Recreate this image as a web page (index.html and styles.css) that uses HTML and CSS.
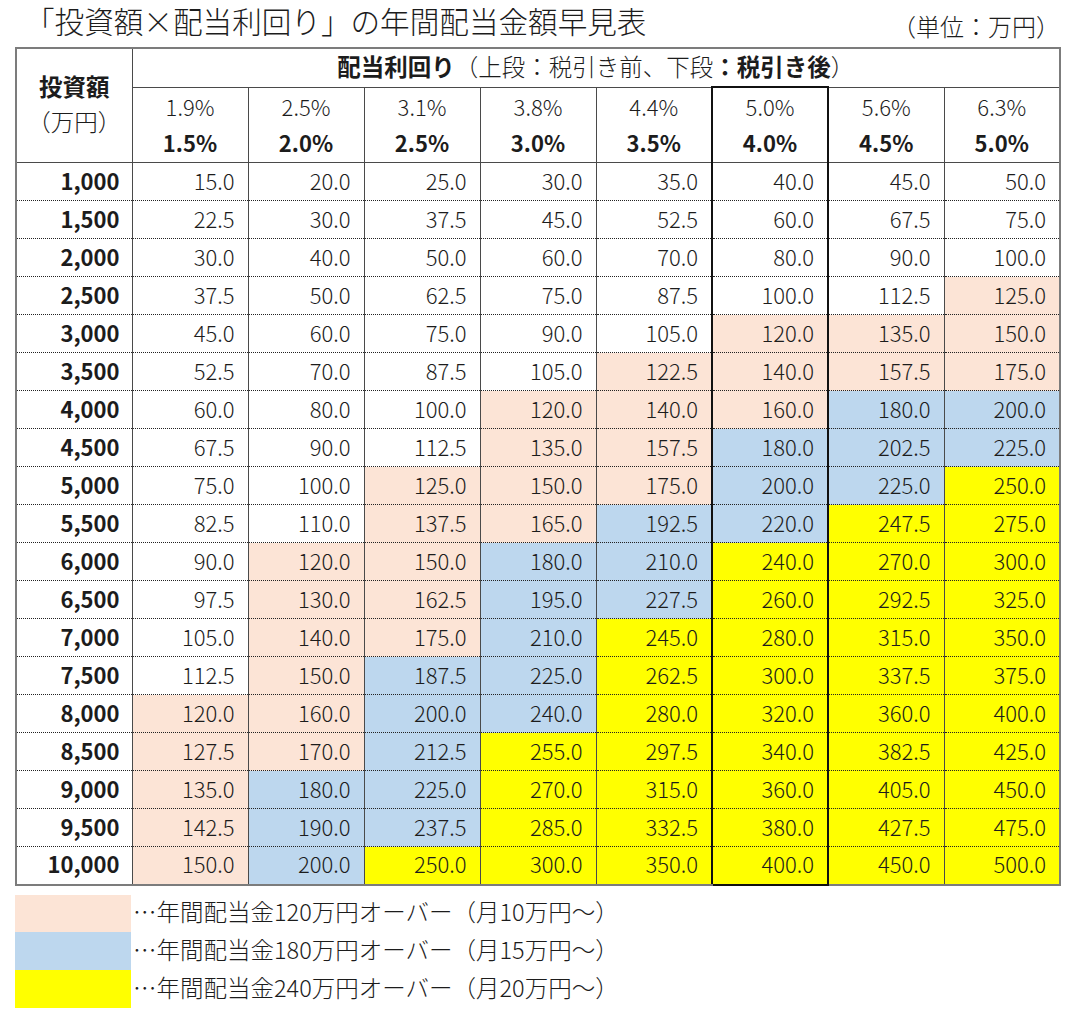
FILE: index.html
```html
<!DOCTYPE html>
<html lang="ja">
<head>
<meta charset="utf-8">
<title>年間配当金額早見表</title>
<link rel="stylesheet" href="styles.css">
</head>
<body>
<div class="page">
  <header class="title-row">
    <h1 class="title">「投資額×配当利回り」の年間配当金額早見表</h1>
    <span class="unit">（単位：万円）</span>
  </header>
  <table class="grid">
    <colgroup>
      <col class="c"><col class="c"><col class="c"><col class="c"><col class="c"><col class="c"><col class="c"><col class="c"><col class="c">
    </colgroup>
    <thead>
      <tr class="h1">
        <th class="corner" rowspan="2"><span class="strong">投資額</span><br>（万円）</th>
        <th class="rates" colspan="8"><span class="strong">配当利回り</span>（上段：税引き前、下段<span class="strong">：税引き後</span>）</th>
      </tr>
      <tr class="h2">
        <th>1.9%<br><span class="strong">1.5%</span></th>
        <th>2.5%<br><span class="strong">2.0%</span></th>
        <th>3.1%<br><span class="strong">2.5%</span></th>
        <th>3.8%<br><span class="strong">3.0%</span></th>
        <th>4.4%<br><span class="strong">3.5%</span></th>
        <th class="hl top">5.0%<br><span class="strong">4.0%</span></th>
        <th>5.6%<br><span class="strong">4.5%</span></th>
        <th>6.3%<br><span class="strong">5.0%</span></th>
      </tr>
    </thead>
    <tbody>
      <tr><th>1,000</th><td>15.0</td><td>20.0</td><td>25.0</td><td>30.0</td><td>35.0</td><td class="hl">40.0</td><td>45.0</td><td>50.0</td></tr>
      <tr><th>1,500</th><td>22.5</td><td>30.0</td><td>37.5</td><td>45.0</td><td>52.5</td><td class="hl">60.0</td><td>67.5</td><td>75.0</td></tr>
      <tr><th>2,000</th><td>30.0</td><td>40.0</td><td>50.0</td><td>60.0</td><td>70.0</td><td class="hl">80.0</td><td>90.0</td><td>100.0</td></tr>
      <tr><th>2,500</th><td>37.5</td><td>50.0</td><td>62.5</td><td>75.0</td><td>87.5</td><td class="hl">100.0</td><td>112.5</td><td class="p">125.0</td></tr>
      <tr><th>3,000</th><td>45.0</td><td>60.0</td><td>75.0</td><td>90.0</td><td>105.0</td><td class="hl p">120.0</td><td class="p">135.0</td><td class="p">150.0</td></tr>
      <tr><th>3,500</th><td>52.5</td><td>70.0</td><td>87.5</td><td>105.0</td><td class="p">122.5</td><td class="hl p">140.0</td><td class="p">157.5</td><td class="p">175.0</td></tr>
      <tr><th>4,000</th><td>60.0</td><td>80.0</td><td>100.0</td><td class="p">120.0</td><td class="p">140.0</td><td class="hl p">160.0</td><td class="b">180.0</td><td class="b">200.0</td></tr>
      <tr><th>4,500</th><td>67.5</td><td>90.0</td><td>112.5</td><td class="p">135.0</td><td class="p">157.5</td><td class="hl b">180.0</td><td class="b">202.5</td><td class="b">225.0</td></tr>
      <tr><th>5,000</th><td>75.0</td><td>100.0</td><td class="p">125.0</td><td class="p">150.0</td><td class="p">175.0</td><td class="hl b">200.0</td><td class="b">225.0</td><td class="y">250.0</td></tr>
      <tr><th>5,500</th><td>82.5</td><td>110.0</td><td class="p">137.5</td><td class="p">165.0</td><td class="b">192.5</td><td class="hl b">220.0</td><td class="y">247.5</td><td class="y">275.0</td></tr>
      <tr><th>6,000</th><td>90.0</td><td class="p">120.0</td><td class="p">150.0</td><td class="b">180.0</td><td class="b">210.0</td><td class="hl y">240.0</td><td class="y">270.0</td><td class="y">300.0</td></tr>
      <tr><th>6,500</th><td>97.5</td><td class="p">130.0</td><td class="p">162.5</td><td class="b">195.0</td><td class="b">227.5</td><td class="hl y">260.0</td><td class="y">292.5</td><td class="y">325.0</td></tr>
      <tr><th>7,000</th><td>105.0</td><td class="p">140.0</td><td class="p">175.0</td><td class="b">210.0</td><td class="y">245.0</td><td class="hl y">280.0</td><td class="y">315.0</td><td class="y">350.0</td></tr>
      <tr><th>7,500</th><td>112.5</td><td class="p">150.0</td><td class="b">187.5</td><td class="b">225.0</td><td class="y">262.5</td><td class="hl y">300.0</td><td class="y">337.5</td><td class="y">375.0</td></tr>
      <tr><th>8,000</th><td class="p">120.0</td><td class="p">160.0</td><td class="b">200.0</td><td class="b">240.0</td><td class="y">280.0</td><td class="hl y">320.0</td><td class="y">360.0</td><td class="y">400.0</td></tr>
      <tr><th>8,500</th><td class="p">127.5</td><td class="p">170.0</td><td class="b">212.5</td><td class="y">255.0</td><td class="y">297.5</td><td class="hl y">340.0</td><td class="y">382.5</td><td class="y">425.0</td></tr>
      <tr><th>9,000</th><td class="p">135.0</td><td class="b">180.0</td><td class="b">225.0</td><td class="y">270.0</td><td class="y">315.0</td><td class="hl y">360.0</td><td class="y">405.0</td><td class="y">450.0</td></tr>
      <tr><th>9,500</th><td class="p">142.5</td><td class="b">190.0</td><td class="b">237.5</td><td class="y">285.0</td><td class="y">332.5</td><td class="hl y">380.0</td><td class="y">427.5</td><td class="y">475.0</td></tr>
      <tr class="last"><th>10,000</th><td class="p">150.0</td><td class="b">200.0</td><td class="y">250.0</td><td class="y">300.0</td><td class="y">350.0</td><td class="hl y">400.0</td><td class="y">450.0</td><td class="y">500.0</td></tr>
    </tbody>
  </table>
  <ul class="legend">
    <li class="legend-item"><span class="swatch sw-p"></span><span class="legend-text">…年間配当金120万円オーバー（月10万円～）</span></li>
    <li class="legend-item"><span class="swatch sw-b"></span><span class="legend-text">…年間配当金180万円オーバー（月15万円～）</span></li>
    <li class="legend-item"><span class="swatch sw-y"></span><span class="legend-text">…年間配当金240万円オーバー（月20万円～）</span></li>
  </ul>
</div>
</body>
</html>
```

FILE: styles.css
```css
* { box-sizing: border-box; }

body {
  margin: 0;
  background: #ffffff;
  color: #1c1c1c;
  font-family: "Noto Sans CJK JP", "Noto Sans", sans-serif;
}

.page {
  width: 1075px;
  padding: 0 15px 0 15px;
}

.title-row {
  display: flex;
  justify-content: space-between;
  align-items: flex-start;
  height: 47px;
}

.title {
  margin: 0 0 0 10px;
  font-size: 29.6px;
  font-weight: 300;
  line-height: 41px;
}

.unit {
  font-size: 24px;
  font-weight: 300;
  line-height: 52px;
  margin-right: 0;
}

.grid {
  border-collapse: collapse;
  table-layout: fixed;
  width: 1045px;
  border: 2px solid #7c7c7c;
  font-size: 22px;
  font-weight: 300;
}

.grid col.c { width: 116px; }

.grid th,
.grid td {
  padding: 0;
  border-left: 1px solid #4a4a4a;
  border-right: 1px solid #4a4a4a;
  font-weight: 300;
}

.grid .strong { font-weight: 700; }

.grid .h1 th { height: 39px; padding-bottom: 3px; }

.grid .h2 th {
  height: 75px;
  padding-bottom: 2px;
  line-height: 36px;
  text-align: center;
  border-top: 1px solid #4a4a4a;
  border-bottom: 1px solid #4a4a4a;
}

.grid .corner {
  font-size: 23.5px;
  line-height: 35px;
  padding-bottom: 4px;
  text-align: center;
  vertical-align: middle;
  border-bottom: 1px solid #4a4a4a;
}

.grid .rates {
  font-size: 23.5px;
  text-align: center;
  line-height: 33px;
  border-bottom: 1px solid #4a4a4a;
}

.grid tbody th,
.grid tbody td {
  height: 38px;
  padding-bottom: 3px;
  line-height: 33px;
  text-align: right;
  padding-right: 13px;
  border-bottom: 1px dotted #222;
}

.grid tbody th {
  font-weight: 700;
  padding-right: 12px;
}

.grid tbody tr.last th,
.grid tbody tr.last td { border-bottom: 2px solid #7c7c7c; }

.grid .hl {
  border-left: 2px solid #111;
  border-right: 2px solid #111;
}
.grid .hl.top { border-top: 2px solid #111; }
.grid tbody tr.last td.hl { border-bottom: 2px solid #111; }

.p { background: #fce4d6; }
.b { background: #bdd7ee; }
.y { background: #ffff00; }

.legend {
  list-style: none;
  margin: 9px 0 0 0;
  padding: 0;
}

.legend-item {
  display: flex;
  align-items: center;
  height: 37.7px;
}

.swatch {
  width: 116px;
  height: 100%;
  flex: none;
}

.sw-p { background: #fce4d6; }
.sw-b { background: #bdd7ee; }
.sw-y { background: #ffff00; }

.legend-text {
  margin-left: 2px;
  margin-bottom: 4px;
  font-size: 23.5px;
  font-weight: 300;
  line-height: 34px;
}
```
